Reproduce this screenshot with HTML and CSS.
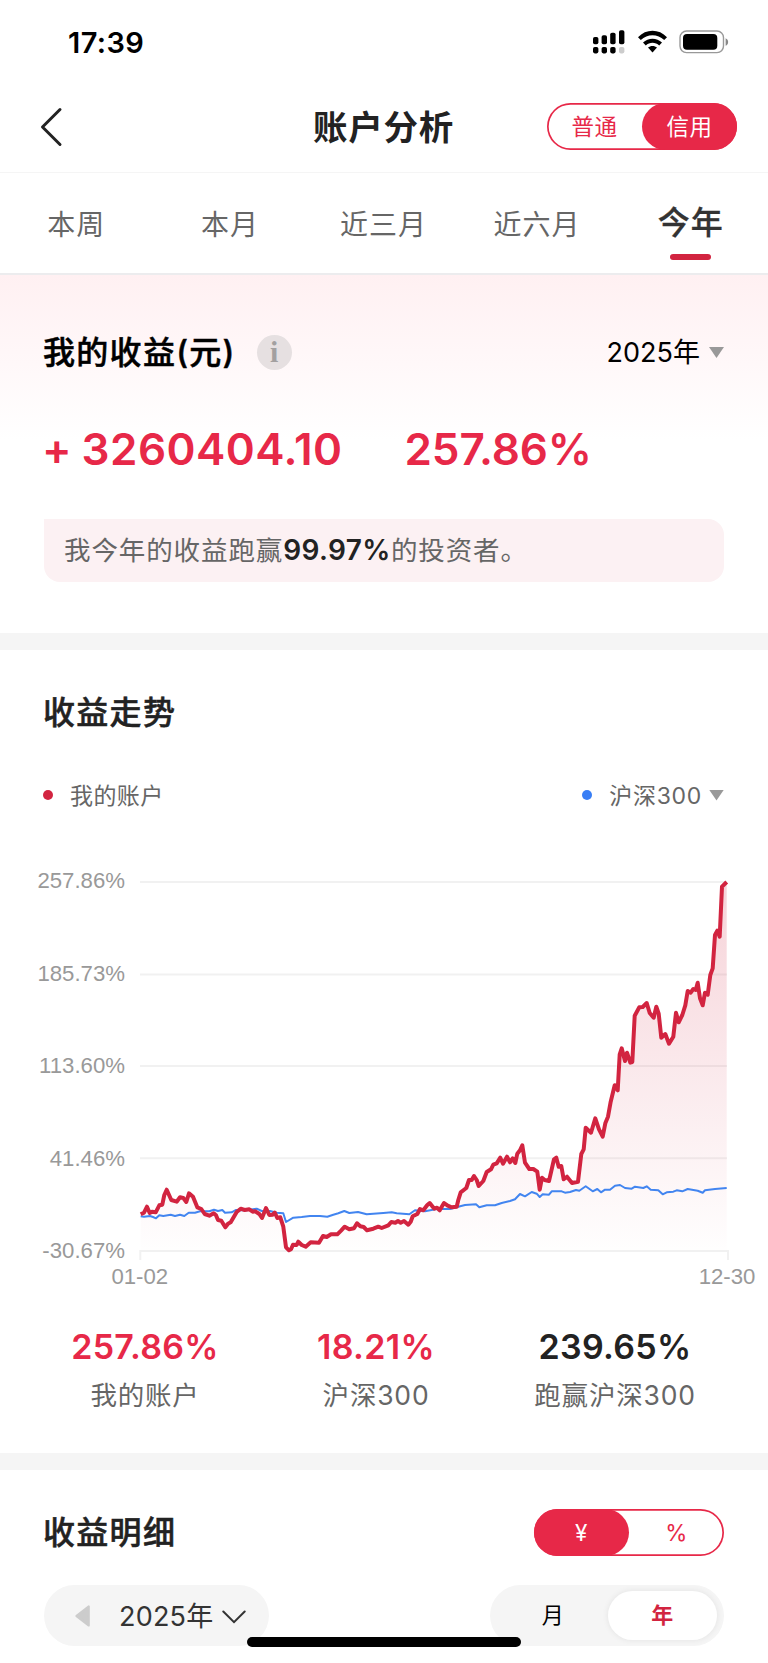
FILE: index.html
```html
<!DOCTYPE html>
<html lang="zh-CN">
<head>
  <meta charset="UTF-8" />
  <meta name="viewport" content="width=device-width, initial-scale=1.0"/>
  <title>账户分析</title>
  <link rel="stylesheet" href="styles.css">
</head>
<body>
  <div class="status-bar">
    <span class="time">17:39</span>
    <svg class="status-icons" width="136" height="26" viewBox="593 29 136 26">
      <!-- signal -->
      <rect x="593" y="37" width="5.4" height="7.2" rx="1.8"/>
      <rect x="601.6" y="35.2" width="5.4" height="9" rx="1.8"/>
      <rect x="610.2" y="32.8" width="5.4" height="11.4" rx="1.8"/>
      <rect x="619" y="30.3" width="5.4" height="13.9" rx="1.8"/>
      <rect x="593" y="47" width="5.4" height="6.4" rx="1.8"/>
      <rect x="601.6" y="47" width="5.4" height="6.4" rx="1.8"/>
      <rect x="610.2" y="47" width="5.4" height="6.4" rx="1.8"/>
      <rect x="619" y="47" width="5.4" height="6.4" rx="1.8" fill="#ccc"/>
      <!-- wifi -->
      <path d="M638 37.3C646 28.7 659 28.7 667 37.3L664.2 40.1C657.6 33.5 647.4 33.5 640.8 40.1Z"/>
      <path d="M643 42.6C648.2 37.3 656.8 37.3 662 42.6L659.2 45.4C655.6 41.9 649.4 41.9 645.8 45.4Z"/>
      <path d="M648 47.6C650.4 45.3 654.6 45.3 657 47.6L652.5 52.6Z"/>
      <!-- battery -->
      <rect x="680" y="31" width="43.5" height="21.6" rx="6.5" fill="none" stroke="#999" stroke-width="1.4"/>
      <rect x="683" y="34" width="34.3" height="15.8" rx="4"/>
      <path d="M725.6 38.2C729 39.6 729 44.4 725.6 45.8Z" fill="#888"/>
    </svg>
  </div>

  <header class="header">
    <svg class="back" width="24" height="42" viewBox="0 0 24 42">
      <path d="M21 3.5L3.5 21L21 38.5"/>
    </svg>
    <h1>账户分析</h1>
    <div class="toggle">
      <span>普通</span>
      <span class="on">信用</span>
    </div>
  </header>

  <nav class="tabs">
    <a>本周</a>
    <a>本月</a>
    <a>近三月</a>
    <a>近六月</a>
    <a class="active">今年</a>
  </nav>

  <section class="profit">
    <div class="row">
      <h2 class="black">我的收益(元)</h2>
      <span class="info">i</span>
      <span class="year">2025年</span>
      <i class="arrow-down"></i>
    </div>
    <div class="amounts">
      <span class="plus">+</span>
      <span class="money">3260404.10</span>
      <span class="rate">257.86%</span>
    </div>
    <p class="note">我今年的收益跑赢<b>99.97%</b>的投资者。</p>
  </section>

  <section class="trend">
    <h2>收益走势</h2>
    <div class="legend">
      <i class="dot red"></i>
      <span>我的账户</span>
      <i class="dot blue"></i>
      <span class="index">沪深300</span>
      <i class="arrow-down"></i>
    </div>

    <svg class="chart" width="768" height="430" viewBox="0 866 768 430">
      <defs>
        <linearGradient id="area" gradientUnits="userSpaceOnUse" x1="0" y1="882" x2="0" y2="1250">
          <stop offset="0" stop-color="#d22440" stop-opacity="0.2"/>
          <stop offset="1" stop-color="#d22440" stop-opacity="0.005"/>
        </linearGradient>
      </defs>
      <g class="grid">
        <path d="M140 882H727M140 974.5H727M140 1066H727M140 1158.3H727"/>
        <path d="M140.3 1260V1251H728V1260"/>
      </g>
      <g class="labels">
        <text x="125" y="888.3" text-anchor="end">257.86%</text>
        <text x="125" y="980.6" text-anchor="end">185.73%</text>
        <text x="125" y="1073.3" text-anchor="end">113.60%</text>
        <text x="125" y="1165.5" text-anchor="end">41.46%</text>
        <text x="125" y="1257.8" text-anchor="end">-30.67%</text>
        <text x="139.8" y="1284" text-anchor="middle">01-02</text>
        <text x="727" y="1284" text-anchor="middle">12-30</text>
      </g>
      <polygon id="fill" fill="url(#area)" points=""/>
      <polyline class="line-index" points="140.7,1216.3 144,1216.7 150,1216 153,1217 156,1218.3 159.3,1215.3 163.3,1216 170.7,1214.7 175,1216 180,1214.7 184.3,1216 188.7,1212.7 195,1212.7 200,1211.3 209.3,1211.3 214,1209.7 218,1211 222.3,1210 225,1212.7 231.7,1212.3 235.7,1210 246.7,1210.3 256.7,1208.7 261.7,1211 270,1211 276.7,1212.7 283.3,1213.3 286,1222 293.3,1217.7 301.7,1217 310,1216 320,1216 327.3,1216.7 333.3,1214.7 338.3,1213.3 344.3,1211 349.3,1213 358,1212 366.7,1214.3 373.3,1213.7 383.3,1213 391.7,1212.3 396.7,1213.3 409.3,1214.3 415,1210.3 425,1211.3 436.7,1209 450,1209 458.3,1206.7 465,1205 476,1204.3 479.3,1207.3 486.7,1205.3 495,1205.3 501.7,1203 510,1201 515,1199.3 520,1194 525,1196.3 531.7,1192 536.7,1193.7 539.7,1197 542.7,1194.3 549,1194.7 551.7,1191.3 561.7,1191.3 565,1192.7 570,1192 576,1190 579.3,1190.7 585.7,1186.3 592.7,1191.3 597.3,1189 601,1192.3 605,1189.7 610,1189.7 615,1185.7 620,1185 625,1188 631.7,1188.7 635,1186.7 643.3,1188 646.7,1186.3 650.7,1189.7 658.3,1190.3 662.7,1194.3 666.7,1192.3 673.3,1191.7 676.7,1190.3 682.3,1191.3 687.7,1189 697.7,1190.7 702.7,1192.7 705,1190.3 715,1189 726.7,1188"/>
      <polyline class="line-mine" id="mine" points="140.7,1214.3 144,1212.7 147,1206.7 149.7,1213 152,1211.7 155.7,1212.3 159.3,1205.3 162.3,1204.7 164.3,1195 166.7,1189.7 171.3,1200 176.7,1201.7 180,1197.3 183.3,1198 186.3,1202 189,1193.3 193,1196.7 197.3,1207.3 201.3,1209 204.7,1214 209.3,1215.7 213.7,1213.3 216,1215.3 218,1220 221.3,1220.7 225.3,1227.3 228,1223.7 230.7,1222.3 236.7,1212 240.7,1208.7 244.7,1210 249.3,1209.3 252.7,1211.7 255.3,1211.3 259.3,1214 262,1218 266,1208 269.3,1215 272.7,1214.7 274.7,1212.5 277.3,1218 280.3,1217.3 283.3,1226.7 286,1247.3 289,1250.3 291,1249.3 293,1244.7 296.7,1245 298.3,1241.7 301.7,1245 305.7,1246.7 310.7,1242.3 319,1242.7 323,1236 326.7,1237 331,1234.3 337.3,1234.3 341.3,1230.3 344.7,1226.7 349.3,1229.3 354,1228.3 357,1223.3 360.3,1226.3 363.7,1227 367,1230.3 373.3,1228.7 378.3,1226.7 381.7,1228 388.3,1225.3 391.3,1222 395.3,1222.7 398,1221 400.7,1222.7 404,1221 408.3,1224.7 410.7,1221.7 412.7,1216.3 417.3,1214 420,1209 423.3,1210.3 427.3,1205 429.7,1203 434.3,1208.7 437,1207.7 439.7,1210.3 444,1203 447.7,1205.7 451.7,1207.3 456.7,1206.7 458.3,1200 460.7,1192.3 466.3,1188 469,1180 471.7,1180 474,1176 476.7,1180 478.7,1186 483.3,1181 486.7,1172 491,1169.3 493.3,1164.7 496.7,1163.3 500.3,1157.7 503,1163.7 507,1156.7 510,1162.3 512.7,1158.3 515.3,1163 517.3,1153.7 520,1150.3 522.3,1145.3 525,1162.7 529.3,1169 533.3,1169 537.3,1171.7 539.7,1189.7 542,1177.7 544.7,1180 549,1181 554,1159.3 556.3,1157.7 558.7,1166.7 561.3,1166 563.7,1179.3 567,1176.7 572,1183 578,1181.7 581.3,1154 583.7,1149.3 585.7,1127.7 591,1132.7 595.3,1118.3 599,1129.3 602.7,1136.7 605.3,1123.3 608,1116.7 610.7,1101.7 614.7,1085.3 617.7,1090.3 619.7,1054.3 621.7,1048.3 625,1061 627,1052.7 630.3,1062.7 632.3,1062 634.7,1015.7 639.3,1007.3 642.7,1007 646.7,1003 649.7,1013 653.7,1017.7 656.3,1006.7 658.7,1013.7 661.3,1037.7 665.3,1034 669,1043.7 673.3,1036.7 676,1012.7 678.7,1022.3 682.3,1015 685.3,1005.3 687.7,991 690.7,992.7 693.3,989 695.7,990 697.7,982.7 700,998.3 702.7,1005.3 705,992.7 707.7,994.7 710.3,975 712.7,968.3 715,935 717.3,930.7 719.7,936.7 722,886.7 726.7,882"/>
    </svg>

    <div class="stats">
      <div class="stat up"><b>257.86%</b><span>我的账户</span></div>
      <div class="stat up"><b>18.21%</b><span>沪深300</span></div>
      <div class="stat"><b>239.65%</b><span>跑赢沪深300</span></div>
    </div>
  </section>

  <section class="detail">
    <div class="row">
      <h2>收益明细</h2>
      <div class="toggle">
        <span class="on">¥</span>
        <span>%</span>
      </div>
    </div>
    <div class="row filters">
      <div class="year-picker">
        <svg width="16" height="22" viewBox="0 0 16 22"><path d="M13.6 1.6V20.4L1.6 11Z" fill="#ccc" stroke="#ccc" stroke-width="2.4" stroke-linejoin="round"/></svg>
        <span>2025年</span>
        <svg class="chevron" width="24" height="14" viewBox="0 0 24 14"><path d="M1.3 1.5L12 12.2L22.7 1.5" fill="none" stroke="#333" stroke-width="2" stroke-linecap="round"/></svg>
      </div>
      <div class="unit-picker">
        <span>月</span>
        <span class="on">年</span>
      </div>
    </div>
  </section>

  <div class="home-bar"></div>

  <script>
    // close the line down to the x axis for the shaded area
    const line = document.getElementById('mine').getAttribute('points');
    document.getElementById('fill').setAttribute('points', line + ' 726.7,1250 140.7,1250');
  </script>
</body>
</html>
```

FILE: styles.css
```css
* {
  box-sizing: border-box;
}

body {
  margin: 0;
  position: relative;
  width: 768px;
  height: 1663px;
  overflow: hidden;
  background: #fff;
  color: #222;
  font-family: Inter, "Noto Sans CJK SC", sans-serif;
  white-space: nowrap;
}

h1, h2, p {
  margin: 0;
}

.status-bar {
  display: flex;
  justify-content: space-between;
  height: 84px;
  padding: 29px 39px 0 68px;
}

.time {
  font-size: 29px;
  font-weight: 600;
  line-height: 27px;
  letter-spacing: 0.4px;
  color: #000;
}

.header {
  display: grid;
  grid-template-columns: 190px 1fr 190px;
  align-items: center;
  height: 89px;
  padding: 0 31px 2px 39px;
  border-bottom: 1px solid #f5f5f5;
}

.header .toggle {
  margin-bottom: 1px;
}

.back path {
  fill: none;
  stroke: #222;
  stroke-width: 3;
  stroke-linecap: round;
  stroke-linejoin: round;
}

h1 {
  font-size: 34.5px;
  font-weight: 600;
  letter-spacing: 0.7px;
  line-height: 40px;
  text-align: center;
  padding: 1px 9px 0 0;
}

.toggle {
  display: flex;
  width: 190px;
  height: 47px;
  border-radius: 24px;
  box-shadow: inset 0 0 0 1.7px #e72848;
}

.toggle span {
  flex: 1;
  font-size: 22.5px;
  line-height: 47px;
  letter-spacing: 0.5px;
  text-align: center;
  color: #e72848;
}

.toggle .on {
  background: #e72848;
  border-radius: 24px;
  color: #fff;
}

.tabs {
  display: flex;
  height: 102px;
  border-bottom: 2px solid #ececee;
}

.tabs a {
  display: flex;
  flex-direction: column;
  align-items: center;
  flex: 1;
  padding: 32px 1px 0 0;
  font-size: 28px;
  line-height: 40px;
  letter-spacing: 1px;
  color: #666;
}

.tabs .active {
  padding-top: 30px;
  font-size: 32px;
  font-weight: 500;
  -webkit-text-stroke: 0.3px #333;
  color: #333;
}

.tabs .active::after {
  content: "";
  width: 41px;
  height: 6px;
  margin-top: 11px;
  border-radius: 3px;
  background: #d22440;
}

h2 {
  margin-left: -1px;
  padding-top: 1px;
  font-size: 32px;
  font-weight: 500;
  line-height: 44px;
  letter-spacing: 1.3px;
  -webkit-text-stroke: 0.5px currentColor;
}

.row {
  display: flex;
  align-items: center;
}

.arrow-down {
  width: 15px;
  height: 11px;
  background: #999;
  clip-path: polygon(0 0, 100% 0, 50% 100%);
}

.profit {
  height: 375px;
  padding: 55px 44px 0;
  border-bottom: 17px solid #f5f5f5;
  background: linear-gradient(#fff0f2, #fff 165px);
}

.black {
  color: #000;
}

.info {
  width: 35px;
  height: 35px;
  margin-left: 21px;
  border-radius: 50%;
  background: #e6e0e1;
  color: #a3a0a0;
  font: bold 30px/34px "Liberation Serif", serif;
  text-align: center;
}

.year {
  margin-left: auto;
  margin-right: 9px;
  padding-top: 1px;
  font-size: 27px;
  line-height: 40px;
  color: #000;
}

.amounts {
  display: flex;
  margin: 47px 0 0 -2px;
  font-size: 44px;
  font-weight: 600;
  line-height: 54px;
  color: #e72848;
}

.money {
  margin-left: 10px;
  letter-spacing: 0.45px;
}

.rate {
  margin-left: 62px;
  letter-spacing: -0.15px;
}

.note {
  height: 63px;
  margin-top: 43px;
  padding-left: 20px;
  border-radius: 0 16px 16px 16px;
  background: #fcf1f3;
  font-size: 26.5px;
  line-height: 62px;
  letter-spacing: 0.9px;
  color: #666;
}

.note b {
  font-size: 28px;
  font-weight: 600;
  letter-spacing: 0.4px;
  color: #222;
}

.trend {
  height: 820px;
  padding-top: 40px;
  border-bottom: 17px solid #f5f5f5;
}

.trend h2 {
  padding-left: 44px;
}

.legend {
  display: flex;
  align-items: center;
  height: 40px;
  margin-top: 40px;
  padding: 0 44px 0 43px;
  font-size: 23px;
  letter-spacing: 0.4px;
  color: #666;
}

.legend span {
  padding-bottom: 2px;
}

.dot {
  width: 10px;
  height: 10px;
  margin-right: 17px;
  border-radius: 50%;
}

.red {
  background: #d22440;
}

.blue {
  margin-left: auto;
  background: #387ef5;
}

.index {
  margin-right: 7px;
  letter-spacing: 0.7px;
}

.chart {
  display: block;
  margin-top: 51px;
}

.grid path {
  fill: none;
  stroke: #f1f1f1;
  stroke-width: 2;
}

.labels {
  font-family: "Liberation Sans", sans-serif;
  font-size: 22.2px;
  fill: #999;
}

.line-index {
  fill: none;
  stroke: #4285f0;
  stroke-width: 2;
  stroke-linejoin: round;
}

.line-mine {
  fill: none;
  stroke: #d22440;
  stroke-width: 4;
  stroke-linejoin: round;
}

.stats {
  display: grid;
  grid-template-columns: 202px 260px 218px;
  padding: 30px 44px 0;
}

.stat {
  display: flex;
  flex-direction: column;
  align-items: center;
}

.stat b {
  font-size: 34px;
  font-weight: 600;
  line-height: 42px;
  letter-spacing: 0.3px;
}

.stat span {
  margin-top: 8px;
  font-size: 26.5px;
  line-height: 38px;
  letter-spacing: 0.8px;
  color: #666;
}

.up b {
  color: #e72848;
}

.detail {
  padding: 39px 44px 0;
}

.detail .toggle {
  margin-left: auto;
}

.filters {
  justify-content: space-between;
  margin-top: 29px;
}

.year-picker {
  display: flex;
  align-items: center;
  width: 225px;
  height: 61px;
  padding-left: 31px;
  border-radius: 31px;
  background: #f5f5f5;
  font-size: 27px;
  color: #333;
}

.year-picker span {
  margin: 0 9px 0 28px;
  padding-bottom: 2px;
  letter-spacing: 0.2px;
}

.chevron {
  margin-top: 3px;
}

.unit-picker {
  display: flex;
  align-items: center;
  width: 234px;
  height: 61px;
  padding: 0 7px 0 8px;
  border-radius: 31px;
  background: #f5f5f5;
  font-size: 22px;
  color: #000;
}

.unit-picker span {
  flex: 1;
  height: 49px;
  line-height: 48px;
  text-align: center;
}

.unit-picker .on {
  border-radius: 25px;
  background: #fff;
  box-shadow: 0 0 6px rgba(0, 0, 0, 0.08);
  font-weight: 600;
  color: #d22440;
}

.home-bar {
  position: absolute;
  left: 247px;
  top: 1637px;
  width: 274px;
  height: 10px;
  border-radius: 5px;
  background: #000;
}
```
